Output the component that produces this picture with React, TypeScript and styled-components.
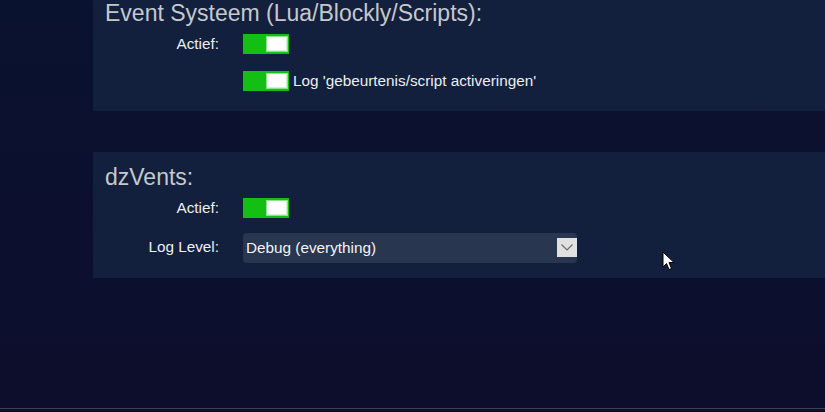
import React, { useState } from "react";
import styled, { createGlobalStyle } from "styled-components";

const GlobalStyle = createGlobalStyle`
    html, body {
        margin: 0;
        padding: 0;
        height: 100%;
        overflow: hidden;
    }
    body {
        font-family: "Liberation Sans", Arial, sans-serif;
        background: #0b0f2d;
    }
`;

const SPage = styled.div`
    position: relative;
    display: flex;
    flex-direction: column;
    height: 100vh;
    background: linear-gradient(180deg, #09122f 0%, #0c0f2e 60%, #0d0e2c 100%);
`;

const SContent = styled.main`
    flex: 1;
    display: flex;
    flex-direction: column;
    gap: 41px;
    padding-left: 93px;
    margin-top: -12px;
`;

const SPanel = styled.section`
    background: #12203d;
    padding: 13px 0 11px 12px;
`;

const STitle = styled.h2`
    margin: 0;
    font-size: 23px;
    line-height: 24px;
    font-weight: normal;
    color: #c6c8cc;
`;

const SRow = styled.div`
    display: flex;
    align-items: center;
    min-height: 37.5px;
`;

const SLabel = styled.label`
    width: 114px;
    margin-right: 24px;
    text-align: right;
    font-size: 15.3px;
    color: #eceef0;
`;

const SSwitch = styled.button<{ $on: boolean }>`
    position: relative;
    flex: none;
    width: 46px;
    height: 20px;
    padding: 0;
    border: none;
    cursor: pointer;
    background: ${(p) => (p.$on ? "#14bf14" : "#555c6a")};
    &::after {
        content: "";
        position: absolute;
        top: 2px;
        left: ${(p) => (p.$on ? "23px" : "1px")};
        width: 20px;
        height: 14px;
        background: #ffffff;
        border: 1px solid #8fe28f;
        box-shadow: inset -1px -1px 0 #d6f0d6;
    }
`;

const SNote = styled.span`
    margin-left: 4px;
    font-size: 15.3px;
    color: #eceef0;
`;

const SSelect = styled.div`
    display: flex;
    align-items: center;
    justify-content: space-between;
    width: 334px;
    height: 30px;
    margin: 6px 0 4px;
    padding-left: 3px;
    box-sizing: border-box;
    border-radius: 4px;
    background: #28364f;
    font-size: 15.3px;
    color: #f2f4f6;
`;

const SArrow = styled.span`
    display: flex;
    align-items: center;
    justify-content: center;
    width: 20px;
    height: 19px;
    background: #e1e1e1;
`;

const SFooter = styled.footer`
    height: 3px;
    border-top: 1px solid #3e3f52;
`;

const SCursor = styled.svg`
    position: absolute;
    left: 662px;
    top: 251px;
`;

const Toggle = ({ initial }: { initial: boolean }) => {
    const [on, setOn] = useState(initial);
    return <SSwitch $on={on} onClick={() => setOn(!on)} aria-pressed={on} />;
};

export default function App() {
    return (
        <SPage>
            <GlobalStyle />
            <SContent>
                <SPanel>
                    <STitle>Event Systeem (Lua/Blockly/Scripts):</STitle>
                    <SRow>
                        <SLabel>Actief:</SLabel>
                        <Toggle initial />
                    </SRow>
                    <SRow>
                        <SLabel />
                        <Toggle initial />
                        <SNote>Log 'gebeurtenis/script activeringen'</SNote>
                    </SRow>
                </SPanel>
                <SPanel>
                    <STitle>dzVents:</STitle>
                    <SRow>
                        <SLabel>Actief:</SLabel>
                        <Toggle initial />
                    </SRow>
                    <SRow>
                        <SLabel>Log Level:</SLabel>
                        <SSelect>
                            <span>Debug (everything)</span>
                            <SArrow>
                                <svg width="12" height="7" viewBox="0 0 12 7">
                                    <path d="M0.5 0.5 L6 6 L11.5 0.5" fill="none" stroke="#6c6c6c" strokeWidth="1.2" />
                                </svg>
                            </SArrow>
                        </SSelect>
                    </SRow>
                </SPanel>
            </SContent>
            <SFooter />
            <SCursor width="13" height="20" viewBox="0 0 13 20">
                <path d="M1 1 L1 16 L4.5 12.5 L7 18.5 L9.5 17.5 L7 11.5 L12 11.5 Z" fill="#ffffff" stroke="#000000" strokeWidth="1" strokeLinejoin="miter" />
            </SCursor>
        </SPage>
    );
}
